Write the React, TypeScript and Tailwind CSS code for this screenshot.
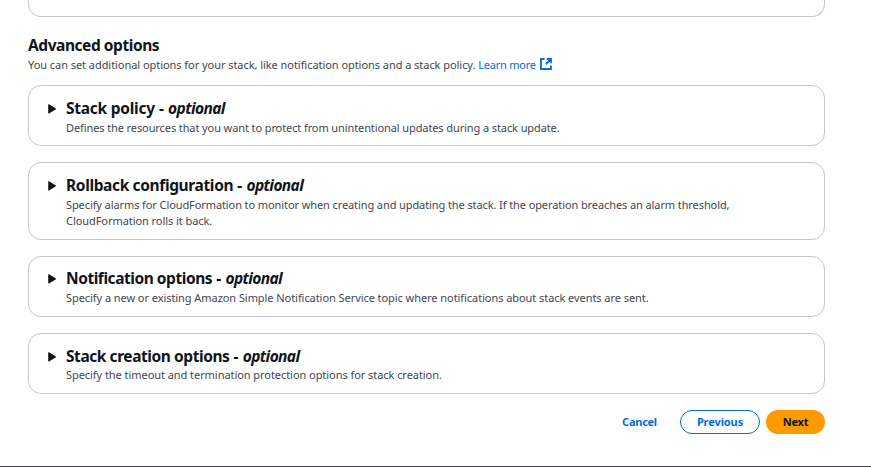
import type { ReactNode } from "react";

function Section({ title, titleClass, bodyClass, className, children }: {
  title: string;
  titleClass: string;
  bodyClass: string;
  className: string;
  children: ReactNode;
}) {
  return (
    <section className={`flex rounded-[13px] border border-[#c6c6cd] pl-[18px] ${className}`}>
      <svg className="mt-[6px] h-[10px] w-[9px] shrink-0" viewBox="0 0 9 10" fill="#0f141a">
        <path d="M1.2 .7C1.2 .1 1.6 0 2 .3L8.6 4.3c.5.3.5.8 0 1.1L2 9.4C1.6 9.6 1.2 9.4 1.2 8.9Z" />
      </svg>
      <div className="ml-[10px]">
        <h2 className="flex h-[20px] items-center whitespace-pre text-[15.5px] font-bold leading-[20px] text-[#0f141a]">
          <span className={titleClass}>{title}</span>
          <span className="tracking-[0.1px]"> - </span>
          <em className="tracking-[-0.6px]">optional</em>
        </h2>
        <div className={`whitespace-nowrap text-[11px] leading-[16px] text-[#424650] ${bodyClass}`}>{children}</div>
      </div>
    </section>
  );
}

export default function App() {
  return (
    <div className="flex h-[467px] w-[871px] flex-col overflow-hidden border-b border-[#424650] bg-white pl-[28px] pr-[46px] font-['Noto_Sans',sans-serif]">
      <div className="h-[17px] shrink-0 rounded-b-[13px] border border-t-0 border-[#c6c6cd]" />
      <header className="mt-[18px] h-[50px] shrink-0">
        <h1 className="text-[15.5px] font-bold leading-[20px] text-[#0f141a]">
          <span className="tracking-[-0.44px]">Advanced options</span>
        </h1>
        <p className="mt-[2px] flex items-center whitespace-pre text-[11px] leading-[16px] text-[#424650]">
          <span className="tracking-[-0.05px]">You can set additional options for your stack, like notification options and a stack policy. </span>
          <a className="flex items-center text-[#006ce0]">
            <span className="tracking-[-0.23px]">Learn more</span>
            <svg className="-mt-[2px] ml-[4px] h-[12px] w-[12px]" viewBox="0 0 12 12" fill="none" stroke="#006ce0" strokeWidth="1.8">
              <path d="M4.6 1H1v10h10V7.6M6.8 1H11v4.2M10.6 1.4 6 6" />
              <path d="M7.4 1H11v3.6Z" fill="#006ce0" stroke="none" />
            </svg>
          </a>
        </p>
      </header>
      <main className="flex shrink-0 flex-col">
        <Section title="Stack policy" className="h-[61px] pt-[12px]" titleClass="tracking-[-0.25px]" bodyClass="mt-[2px] tracking-[-0.1px]">
          <span>Defines the resources that you want to protect from unintentional updates during a stack update.</span>
        </Section>
        <Section title="Rollback configuration" className="mt-[16px] h-[78px] pt-[12px]" titleClass="tracking-[-0.36px]" bodyClass="mt-[2px] tracking-[-0.095px]">
          <span>Specify alarms for CloudFormation to monitor when creating and updating the stack. If the operation breaches an alarm threshold,</span>
          <br />
          <span className="tracking-[-0.06px]">CloudFormation rolls it back.</span>
        </Section>
        <Section title="Notification options" className="mt-[16px] h-[61px] pt-[11px]" titleClass="tracking-[-0.45px]" bodyClass="mt-[2px] tracking-[-0.06px]">
          <span>Specify a new or existing Amazon Simple Notification Service topic where notifications about stack events are sent.</span>
        </Section>
        <Section title="Stack creation options" className="mt-[16px] h-[61px] pt-[12px]" titleClass="tracking-[-0.43px]" bodyClass="mt-px tracking-[-0.055px]">
          <span>Specify the timeout and termination protection options for stack creation.</span>
        </Section>
      </main>
      <footer className="mt-[16px] flex h-[24px] shrink-0 items-center justify-end text-[11px] font-bold text-[#006ce0]">
        <button className="flex h-[24px] w-[69px] items-center justify-center"><span className="tracking-[-0.25px]">Cancel</span></button>
        <button className="ml-[6px] flex h-[24px] w-[80px] items-center justify-center rounded-full border border-[#006ce0]"><span className="tracking-[-0.1px]">Previous</span></button>
        <button className="ml-[6px] flex h-[24px] w-[59px] items-center justify-center rounded-full bg-[#ff9900] text-[#0f141a]"><span className="tracking-[-0.2px]">Next</span></button>
      </footer>
    </div>
  );
}
